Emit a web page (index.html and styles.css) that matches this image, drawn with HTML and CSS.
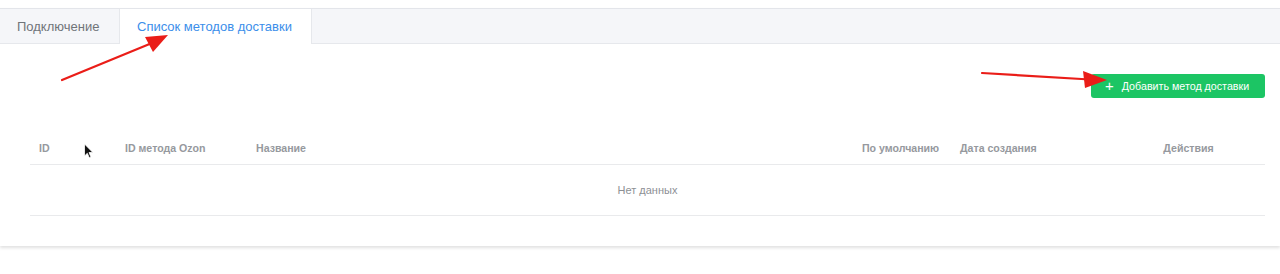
FILE: index.html
```html
<!DOCTYPE html>
<html lang="ru">
<head>
<meta charset="utf-8">
<title>Методы доставки</title>
<link rel="stylesheet" href="styles.css">
</head>
<body>
<div class="page">
  <div class="card">
    <div class="tabs">
      <div class="tab">Подключение</div>
      <div class="tab active">Список методов доставки</div>
    </div>
    <div class="content">
      <div class="toolbar">
        <button class="btn-add"><span class="plus">+</span>Добавить метод доставки</button>
      </div>
      <div class="table">
        <div class="row head">
          <div class="cell">ID</div>
          <div class="cell">ID метода Ozon</div>
          <div class="cell">Название</div>
          <div class="cell">По умолчанию</div>
          <div class="cell">Дата создания</div>
          <div class="cell center">Действия</div>
        </div>
        <div class="empty">Нет данных</div>
      </div>
    </div>
  </div>
  <svg class="overlay" width="1280" height="274" viewBox="0 0 1280 274">
    <line x1="62" y1="80" x2="152" y2="43" stroke="#ea1d18" stroke-width="2.2" stroke-linecap="round"/>
    <polygon points="168,35 145,37 153,52" fill="#ea1d18"/>
    <line x1="982" y1="73" x2="1090" y2="79.5" stroke="#ea1d18" stroke-width="2.2" stroke-linecap="round"/>
    <polygon points="1107,80 1083,71 1085,88" fill="#ea1d18"/>
    <path d="M84.5 144 L84.5 156 L87.3 153.3 L89.3 157.8 L91 157 L89 152.6 L92.8 152.4 Z" fill="#111" stroke="#fff" stroke-width="0.8"/>
  </svg>
</div>
</body>
</html>
```

FILE: styles.css
```css
* { box-sizing: border-box; }
html, body {
  margin: 0;
  padding: 0;
  background: #ffffff;
  font-family: "Liberation Sans", Arial, sans-serif;
}
.page {
  position: relative;
  width: 1280px;
  height: 274px;
  padding-top: 8px;
}
.card {
  background: #fff;
  border-top: 1px solid #e3e5ea;
  box-shadow: 0 2px 3px rgba(0, 0, 0, 0.12);
  padding-bottom: 30px;
}
.tabs {
  display: flex;
  height: 35px;
  background: #f5f6f9;
  border-bottom: 1px solid #e6e8ec;
}
.tab {
  height: 35px;
  display: flex;
  align-items: center;
  padding: 0 17px;
  font-size: 13px;
  color: #707479;
  border-right: 1px solid #e6e8ec;
}
.tab:first-child {
  width: 119px;
  border-right: none;
}
.tab.active {
  background: #fff;
  color: #3b8eea;
  width: 193px;
  height: 35px;
  margin-bottom: -1px;
  border-left: 1px solid #e6e8ec;
  padding-left: 17px;
}
.content {
  padding: 30px 15px 0 30px;
}
.toolbar {
  display: flex;
  justify-content: flex-end;
}
.btn-add {
  width: 174px;
  height: 24px;
  background: #1cc564;
  border: none;
  border-radius: 3px;
  color: #fff;
  font-family: inherit;
  font-size: 10.7px;
  display: flex;
  align-items: center;
  padding: 0 0 0 14px;
}
.plus {
  font-size: 15px;
  font-weight: 300;
  margin-right: 8px;
  line-height: 1;
  margin-top: -2px;
}
.table {
  margin-top: 34px;
}
.row {
  display: grid;
  grid-template-columns: 86px 131px 605px 99px 161px 1fr;
}
.head {
  height: 33px;
  border-bottom: 1px solid #e9eaec;
}
.cell {
  font-size: 10.6px;
  font-weight: bold;
  color: #96999e;
  padding: 10px 0 0 9px;
}
.head .cell:nth-child(4) { padding-left: 10px; }
.cell.center {
  text-align: center;
  padding-left: 0;
}
.empty {
  height: 51px;
  display: flex;
  align-items: center;
  justify-content: center;
  font-size: 11px;
  color: #8d9095;
  border-bottom: 1px solid #e9eaec;
}
.overlay {
  position: absolute;
  left: 0;
  top: 0;
  pointer-events: none;
}
```
